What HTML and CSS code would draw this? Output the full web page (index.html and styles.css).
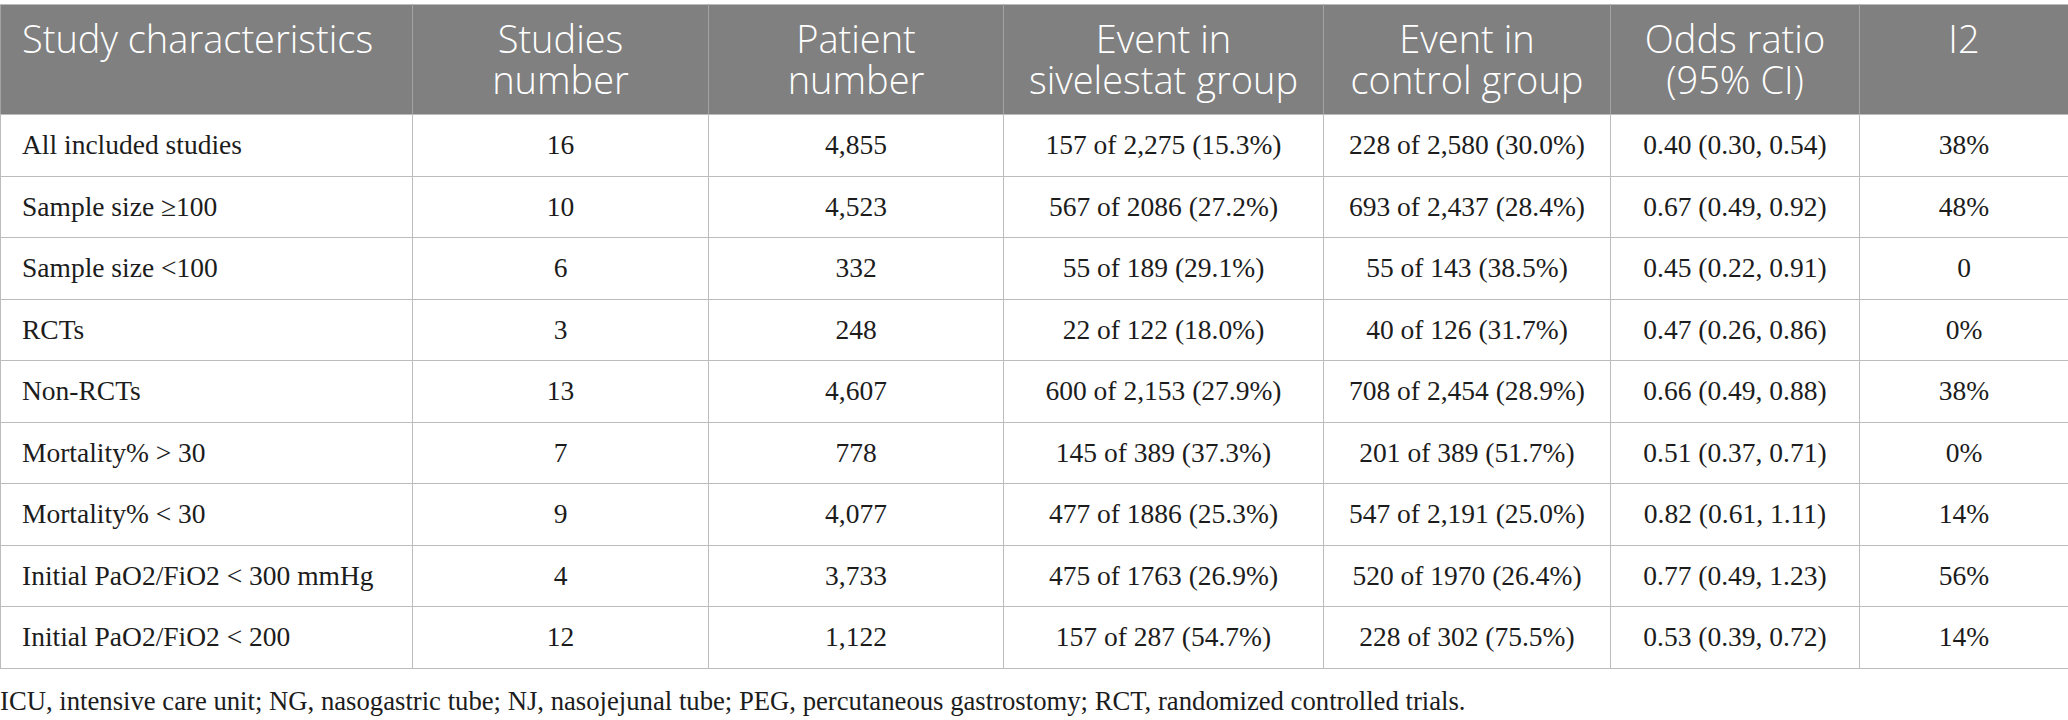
FILE: index.html
```html
<!DOCTYPE html>
<html lang="en">
<head>
<meta charset="utf-8">
<title>Sivelestat subgroup analysis</title>
<link rel="stylesheet" href="styles.css">
</head>
<body>
<table class="data">
  <colgroup>
    <col class="c1"><col class="c2"><col class="c3"><col class="c4"><col class="c5"><col class="c6"><col class="c7">
  </colgroup>
  <thead>
    <tr>
      <th class="left">Study characteristics</th>
      <th>Studies<br>number</th>
      <th>Patient<br>number</th>
      <th>Event in<br>sivelestat group</th>
      <th>Event in<br>control group</th>
      <th>Odds ratio<br>(95% CI)</th>
      <th>I2</th>
    </tr>
  </thead>
  <tbody>
    <tr><td class="left">All included studies</td><td>16</td><td>4,855</td><td>157 of 2,275 (15.3%)</td><td>228 of 2,580 (30.0%)</td><td>0.40 (0.30, 0.54)</td><td>38%</td></tr>
    <tr><td class="left">Sample size ≥100</td><td>10</td><td>4,523</td><td>567 of 2086 (27.2%)</td><td>693 of 2,437 (28.4%)</td><td>0.67 (0.49, 0.92)</td><td>48%</td></tr>
    <tr><td class="left">Sample size &lt;100</td><td>6</td><td>332</td><td>55 of 189 (29.1%)</td><td>55 of 143 (38.5%)</td><td>0.45 (0.22, 0.91)</td><td>0</td></tr>
    <tr><td class="left">RCTs</td><td>3</td><td>248</td><td>22 of 122 (18.0%)</td><td>40 of 126 (31.7%)</td><td>0.47 (0.26, 0.86)</td><td>0%</td></tr>
    <tr><td class="left">Non-RCTs</td><td>13</td><td>4,607</td><td>600 of 2,153 (27.9%)</td><td>708 of 2,454 (28.9%)</td><td>0.66 (0.49, 0.88)</td><td>38%</td></tr>
    <tr><td class="left">Mortality% &gt; 30</td><td>7</td><td>778</td><td>145 of 389 (37.3%)</td><td>201 of 389 (51.7%)</td><td>0.51 (0.37, 0.71)</td><td>0%</td></tr>
    <tr><td class="left">Mortality% &lt; 30</td><td>9</td><td>4,077</td><td>477 of 1886 (25.3%)</td><td>547 of 2,191 (25.0%)</td><td>0.82 (0.61, 1.11)</td><td>14%</td></tr>
    <tr><td class="left">Initial PaO2/FiO2 &lt; 300 mmHg</td><td>4</td><td>3,733</td><td>475 of 1763 (26.9%)</td><td>520 of 1970 (26.4%)</td><td>0.77 (0.49, 1.23)</td><td>56%</td></tr>
    <tr><td class="left">Initial PaO2/FiO2 &lt; 200</td><td>12</td><td>1,122</td><td>157 of 287 (54.7%)</td><td>228 of 302 (75.5%)</td><td>0.53 (0.39, 0.72)</td><td>14%</td></tr>
  </tbody>
</table>
<p class="note">ICU, intensive care unit; NG, nasogastric tube; NJ, nasojejunal tube; PEG, percutaneous gastrostomy; RCT, randomized controlled trials.</p>
</body>
</html>
```

FILE: styles.css
```css
html, body {
  margin: 0;
  padding: 0;
  background: #ffffff;
}

body {
  padding-top: 4px;
}

.data {
  width: 2068px;
  border-collapse: collapse;
  table-layout: fixed;
  border: 1px solid #bcbcbc;
}

.c1 { width: 412px; }
.c2 { width: 296px; }
.c3 { width: 295px; }
.c4 { width: 320px; }
.c5 { width: 287px; }
.c6 { width: 249px; }
.c7 { width: 209px; }

.data th {
  background: #808080;
  color: #ffffff;
  font-family: "Open Sans", "Noto Sans", sans-serif;
  font-weight: 300;
  font-size: 38px;
  line-height: 41px;
  text-align: center;
  vertical-align: top;
  padding: 13px 6px 14px;
  height: 82px;
  border: 1px solid #a3a3a3;
  border-top-color: #bcbcbc;
  border-bottom-color: #bcbcbc;
}

.data td {
  font-family: "Liberation Serif", "Times New Roman", serif;
  font-size: 27.5px;
  color: #1c1c1c;
  text-align: center;
  vertical-align: middle;
  height: 60.5px;
  padding: 0 8px;
  border: 1px solid #bcbcbc;
}

.data .left {
  text-align: left;
  padding-left: 21px;
}

.note {
  margin: 17px 0 0;
  font-family: "Liberation Serif", "Times New Roman", serif;
  font-size: 26.7px;
  color: #1c1c1c;
}
```
